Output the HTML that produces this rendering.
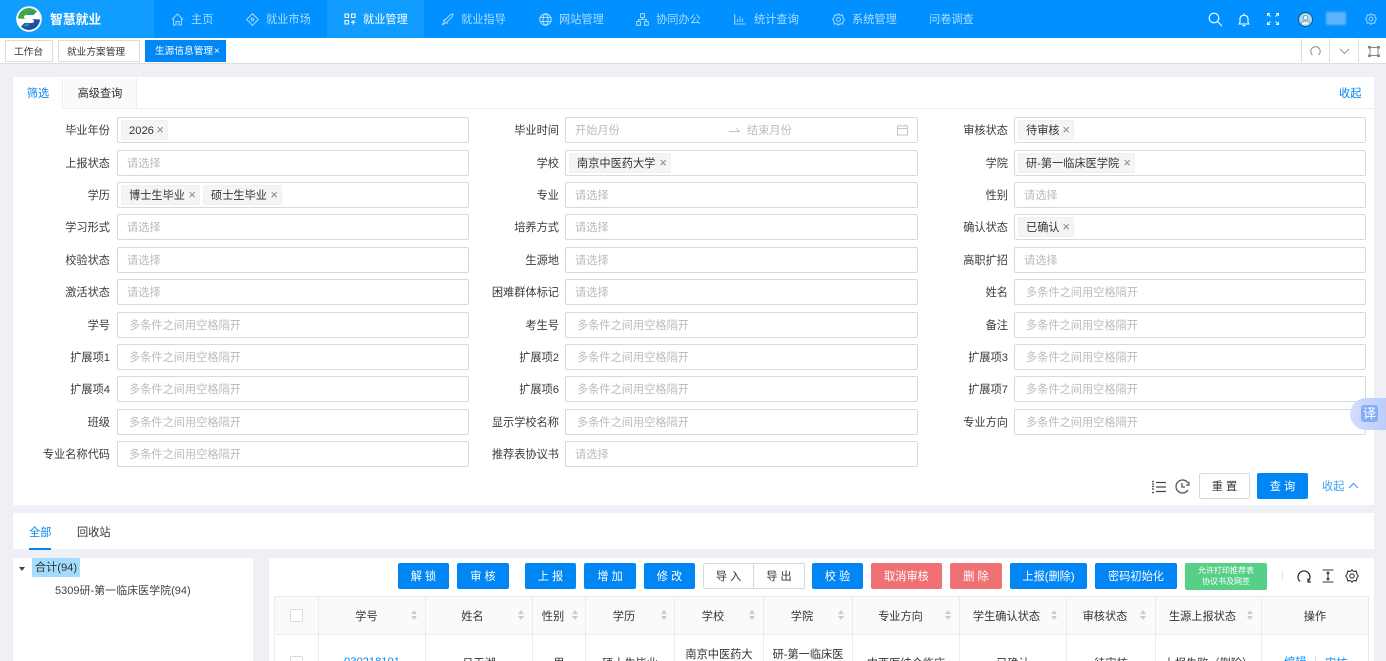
<!DOCTYPE html>
<html lang="zh"><head><meta charset="utf-8"><title>生源信息管理</title>
<style>
*{box-sizing:border-box}
html,body{margin:0;padding:0;width:1386px;height:661px;overflow:hidden}
body{background:#eff0f5;font:11.2px/1 "Liberation Sans","Noto Sans CJK SC",sans-serif;color:#333}
#w{position:absolute;left:0;top:0;width:1386px;height:661px;overflow:hidden}
.a,.a *{position:absolute}
.a{white-space:nowrap}
div,span,svg{white-space:nowrap}
.nav{left:0;top:0;width:1386px;height:38px;background:#0090ff}
.nt{top:13.5px;line-height:13px;color:rgba(255,255,255,.68);font-size:11.2px}
.nav svg{fill:none;stroke:rgba(255,255,255,.62);stroke-width:1.1}
.tab{top:40px;height:22px;border:1px solid #ddd;background:#fff;font-size:9.7px;line-height:23px;text-align:left;color:#333}
.r{left:0;width:1386px;height:26px}
.l{top:0;line-height:28px;text-align:right;width:100px;color:#3a3a3a}
.i{top:0;height:26px;border:1px solid #d9d9d9;border-radius:2px;background:#fff;line-height:26px;padding-left:9px;color:#bbb}
.p{padding-left:11px}
.c1{left:117px;width:352px}.c2{left:565px;width:353px}.c3{left:1014px;width:352px}
.i1{left:10px}.i2{left:459px}.i3{left:908px}
.t{top:2px;left:3px;height:20px;background:#f5f5f5;border:1px solid #f0f0f0;border-radius:2px;color:#333;line-height:20px;padding:0 0 0 7px}
.t i{right:3px;top:0;font-style:normal;color:#888;font-size:13px;line-height:18px}
.b{top:563px;height:26px;background:#0086f5;border-radius:2px;color:#fff;text-align:center;line-height:28px;font-size:11.2px}
.rd{background:#f07174}
.th{top:599px;height:37px;line-height:37px;text-align:center;color:#333}
.s{top:610px;width:0;height:0}
.s:before,.s:after{content:"";position:absolute;left:0;border-left:3px solid transparent;border-right:3px solid transparent}
.s:before{top:0;border-bottom:4px solid #ccc}
.s:after{top:6px;border-top:4px solid #ccc}
.v{top:596px;width:1px;height:65px;background:#ececec}
.td{top:657px;line-height:14px;text-align:center;color:#333}
</style></head><body><div id="w">

<div class="a nav">
 <div style="left:0;top:0;width:154px;height:38px;background:#119dff"></div>
 <div style="left:327px;top:0;width:97px;height:38px;background:#119dff"></div>
 <svg style="left:16px;top:6px" width="26" height="26" viewBox="0 0 26 26"><circle cx="13" cy="13" r="12.800" fill="#fff" stroke="none"/><path d="M2 12.500A11 11 0 0 1 21 5.500L17.500 9H10.500Q8 9 8 11Q8 12.500 10 13Z" fill="#43a64c" stroke="none"/><path d="M24 13.500A11 11 0 0 1 5 20.500L8.500 17H15.500Q18 17 18 15Q18 13.500 16 13Z" fill="#1d4f9e" stroke="none"/><path d="M14 5.500H19L16.500 8.500H12ZM12 20.500H7L9.500 17.500H14Z" fill="#2b8f9a" stroke="none"/></svg>
 <div style="left:50px;top:12px;font-size:12.8px;line-height:15px;font-weight:bold;color:#fff">智慧就业</div>

 <svg style="left:171px;top:13px" width="13" height="13" viewBox="0 0 13 13"><path d="M1 6.500L6.500 1L12 6.500M2.500 5.500V12H5V8.500H8V12H10.500V5.500"/></svg>
 <div class="nt" style="left:191px">主页</div>
 <svg style="left:246px;top:13px" width="13" height="13" viewBox="0 0 13 13"><path d="M6.500.7L12.300 6.500L6.500 12.300L.7 6.500Z"/><circle cx="6.500" cy="6.500" r="1.300"/></svg>
 <div class="nt" style="left:266px">就业市场</div>
 <svg style="left:344px;top:13px;stroke:#fff" width="12" height="12" viewBox="0 0 12 12"><path d="M1 1H4.500V4.500H1ZM7.500 1H11V4.500H7.500ZM1 7.500H4.500V11H1ZM9.200 7V11.500M7 9.200H11.500"/></svg>
 <div class="nt" style="left:363px;color:#fff">就业管理</div>
 <svg style="left:441px;top:13px" width="13" height="13" viewBox="0 0 13 13"><path d="M1 12L4 7L8 3Q10 1 12 1Q12 3 10 5L6 9ZM4 7H2M6 9V11"/></svg>
 <div class="nt" style="left:461px">就业指导</div>
 <svg style="left:539px;top:13px" width="13" height="13" viewBox="0 0 13 13"><circle cx="6.500" cy="6.500" r="5.700"/><ellipse cx="6.500" cy="6.500" rx="2.500" ry="5.700"/><path d="M1 4.500H12M1 8.500H12"/></svg>
 <div class="nt" style="left:559px">网站管理</div>
 <svg style="left:636px;top:13px" width="13" height="13" viewBox="0 0 13 13"><path d="M4.500 .7H8.500V4.500H4.500ZM.7 8.500H4.500V12.300H.7ZM8.500 8.500H12.300V12.300H8.500ZM6.500 4.500V6.500M2.600 8.500V6.500H10.400V8.500"/></svg>
 <div class="nt" style="left:656px">协同办公</div>
 <svg style="left:734px;top:13px" width="12" height="12" viewBox="0 0 12 12"><path d="M.7 1V11H11.500M3.500 9V6M6 9V3.500M8.500 9V5.500"/></svg>
 <div class="nt" style="left:754px">统计查询</div>
 <svg style="left:832px;top:13px" width="13" height="13" viewBox="0 0 13 13"><path d="M6.500.7L8 2.300L10.500 2L11 4.500L12.300 6.500L11 8.500L10.500 11L8 10.700L6.500 12.300L5 10.700L2.500 11L2 8.500L.7 6.500L2 4.500L2.500 2L5 2.300Z"/><circle cx="6.500" cy="6.500" r="2"/></svg>
 <div class="nt" style="left:852px">系统管理</div>
 <div class="nt" style="left:929px">问卷调查</div>

 <svg style="left:1208px;top:12px;stroke:#fff;stroke-width:1.100" width="15" height="15" viewBox="0 0 15 15"><circle cx="6" cy="6" r="4.800"/><path d="M9.500 9.500L14 14"/></svg>
 <svg style="left:1238px;top:13px;stroke:#fff;stroke-width:1.100" width="12" height="14" viewBox="0 0 12 14"><path d="M1 11H11L10 9.500V6Q10 2.500 6 2.300Q2 2.500 2 6V9.500ZM6 .5V2.300M4.500 12.700H7.500"/></svg>
 <svg style="left:1267px;top:13px;stroke:#fff;stroke-width:1" width="12" height="12" viewBox="0 0 12 12"><path d="M.5 3V.5H3M.5 .5L3.500 3.500M9 .5H11.500V3M11.500 .5L8.500 3.500M.5 9V11.500H3M.5 11.500L3.500 8.500M9 11.500H11.500V9M11.500 11.500L8.500 8.500"/></svg>
 <svg style="left:1298px;top:12px" width="15" height="15" viewBox="0 0 15 15"><circle cx="7.500" cy="7.500" r="7" fill="#a8d8f0" stroke="#1d4e7a" stroke-width="1"/><circle cx="7.500" cy="5.800" r="2.300" fill="#e8f6fc" stroke="#3b6f95" stroke-width=".6"/><path d="M3 12.300Q4 9 7.500 9Q11 9 12 12.300" fill="#e8f6fc" stroke="#3b6f95" stroke-width=".6"/></svg>
 <div style="left:1326px;top:12px;width:20px;height:13px;background:#5fb5fb;filter:blur(1px)"></div>
 <svg style="left:1365px;top:13px" width="12" height="12" viewBox="0 0 13 13"><path d="M6.500.7L8 2.300L10.500 2L11 4.500L12.300 6.500L11 8.500L10.500 11L8 10.700L6.500 12.300L5 10.700L2.500 11L2 8.500L.7 6.500L2 4.500L2.500 2L5 2.300Z"/><circle cx="6.500" cy="6.500" r="2"/></svg>
</div>

<div class="a" style="left:0;top:38px;width:1386px;height:26px;background:#fff;border-bottom:1px solid #ddd">
 <div style="left:1301px;top:1px;width:1px;height:23px;background:#ddd"></div>
 <div style="left:1329px;top:1px;width:1px;height:23px;background:#ddd"></div>
 <div style="left:1358px;top:1px;width:1px;height:23px;background:#ddd"></div>
 <svg style="left:1310px;top:7px" width="11" height="11" viewBox="0 0 11 11" fill="none" stroke="#999" stroke-width="1.100"><path d="M2.500 10A4.700 4.700 0 1 1 8.500 10"/></svg>
 <svg style="left:1339px;top:10px" width="11" height="7" viewBox="0 0 11 7" fill="none" stroke="#999" stroke-width="1"><path d="M1 1L5.500 5.500L10 1"/></svg>
 <svg style="left:1368px;top:8px" width="12" height="11" viewBox="0 0 12 11" fill="none" stroke="#888" stroke-width="1"><path d="M2 1.500H10V9.500H2Z"/><path d="M0 0H3V2.500H0ZM9 0H12V2.500H9ZM0 8.500H3V11H0ZM9 8.500H12V11H9Z" fill="#888" stroke="none"/></svg>
</div>
<div class="a tab" style="left:5px;width:48px;padding-left:8px">工作台</div>
<div class="a tab" style="left:58px;width:82px;padding-left:8px">就业方案管理</div>
<div class="a tab" style="left:145px;width:81px;background:#0086f5;border:0;color:#fff;line-height:24px;padding-left:10px">生源信息管理<span style="left:69px;top:0">×</span></div>

<!-- filter panel -->
<div class="a" style="left:13px;top:77px;width:1361px;height:428px;background:#fff"></div>
<div class="a" style="left:13px;top:108px;width:1361px;height:1px;background:#eee"></div>
<div class="a" style="left:14px;top:78px;width:49px;height:31px;background:#fff;border-right:1px solid #eee;line-height:32px;text-align:center;color:#0086f5">筛选</div>
<div class="a" style="left:64px;top:78px;width:73px;height:30px;background:#fafafa;border-right:1px solid #eee;line-height:32px;text-align:center;color:#333">高级查询</div>
<div class="a" style="left:1339px;top:87px;line-height:14px;color:#0086f5">收起</div>

<div class="a r" style="top:117px">
 <div class="l i1">毕业年份</div><div class="i c1"><div class="t" style="width:47px">2026<i>×</i></div></div>
 <div class="l i2">毕业时间</div><div class="i c2">开始月份</div>
 <div class="l i3">审核状态</div><div class="i c3"><div class="t" style="width:56px">待审核<i>×</i></div></div>
</div>
<svg class="a" style="left:729px;top:127px" width="11" height="6" viewBox="0 0 11 6" fill="none" stroke="#c4c4c4"><path d="M0 4.500H10.500L7.500 1.500"/></svg>
<div class="a" style="left:747px;top:124px;line-height:14px;color:#bbb">结束月份</div>
<svg class="a" style="left:897px;top:124px" width="11" height="12" viewBox="0 0 11 12" fill="none" stroke="#c4c4c4"><path d="M.5 2H10.500V11H.5ZM.5 4.500H10.500M3 .5V2M8 .5V2"/></svg>

<div class="a r" style="top:150px">
 <div class="l i1">上报状态</div><div class="i c1">请选择</div>
 <div class="l i2">学校</div><div class="i c2"><div class="t" style="width:102px">南京中医药大学<i>×</i></div></div>
 <div class="l i3">学院</div><div class="i c3"><div class="t" style="width:117px">研-第一临床医学院<i>×</i></div></div>
</div>
<div class="a r" style="top:182px">
 <div class="l i1">学历</div><div class="i c1"><div class="t" style="width:79px">博士生毕业<i>×</i></div><div class="t" style="left:85px;width:79px">硕士生毕业<i>×</i></div></div>
 <div class="l i2">专业</div><div class="i c2">请选择</div>
 <div class="l i3">性别</div><div class="i c3">请选择</div>
</div>
<div class="a r" style="top:214px">
 <div class="l i1">学习形式</div><div class="i c1">请选择</div>
 <div class="l i2">培养方式</div><div class="i c2">请选择</div>
 <div class="l i3">确认状态</div><div class="i c3"><div class="t" style="width:56px">已确认<i>×</i></div></div>
</div>
<div class="a r" style="top:247px">
 <div class="l i1">校验状态</div><div class="i c1">请选择</div>
 <div class="l i2">生源地</div><div class="i c2">请选择</div>
 <div class="l i3">高职扩招</div><div class="i c3">请选择</div>
</div>
<div class="a r" style="top:279px">
 <div class="l i1">激活状态</div><div class="i c1">请选择</div>
 <div class="l i2">困难群体标记</div><div class="i c2">请选择</div>
 <div class="l i3">姓名</div><div class="i c3 p">多条件之间用空格隔开</div>
</div>
<div class="a r" style="top:312px">
 <div class="l i1">学号</div><div class="i c1 p">多条件之间用空格隔开</div>
 <div class="l i2">考生号</div><div class="i c2 p">多条件之间用空格隔开</div>
 <div class="l i3">备注</div><div class="i c3 p">多条件之间用空格隔开</div>
</div>
<div class="a r" style="top:344px">
 <div class="l i1">扩展项1</div><div class="i c1 p">多条件之间用空格隔开</div>
 <div class="l i2">扩展项2</div><div class="i c2 p">多条件之间用空格隔开</div>
 <div class="l i3">扩展项3</div><div class="i c3 p">多条件之间用空格隔开</div>
</div>
<div class="a r" style="top:376px">
 <div class="l i1">扩展项4</div><div class="i c1 p">多条件之间用空格隔开</div>
 <div class="l i2">扩展项6</div><div class="i c2 p">多条件之间用空格隔开</div>
 <div class="l i3">扩展项7</div><div class="i c3 p">多条件之间用空格隔开</div>
</div>
<div class="a r" style="top:409px">
 <div class="l i1">班级</div><div class="i c1 p">多条件之间用空格隔开</div>
 <div class="l i2">显示学校名称</div><div class="i c2 p">多条件之间用空格隔开</div>
 <div class="l i3">专业方向</div><div class="i c3 p">多条件之间用空格隔开</div>
</div>
<div class="a r" style="top:441px">
 <div class="l i1">专业名称代码</div><div class="i c1 p">多条件之间用空格隔开</div>
 <div class="l i2">推荐表协议书</div><div class="i c2">请选择</div>
</div>

<svg class="a" style="left:1151px;top:480px" width="15" height="14" viewBox="0 0 15 14" fill="none" stroke="#444" stroke-width="1.200"><path d="M5 2.500H15M5 7H15M5 11.500H15M1 1.500H3M1 4H3M1 6.500H3M1 9H3M1 12.500H3"/></svg>
<svg class="a" style="left:1175px;top:479px" width="15" height="15" viewBox="0 0 15 15" fill="none" stroke="#555" stroke-width="1.300"><path d="M13 11A6.500 6.500 0 1 1 13 4M7 4V8H10M11 6H14V3"/></svg>
<div class="a" style="left:1199px;top:473px;width:51px;height:26px;border:1px solid #d9d9d9;border-radius:2px;background:#fff;line-height:26px;text-align:center;color:#333">重 置</div>
<div class="a" style="left:1257px;top:473px;width:51px;height:26px;border-radius:2px;background:#0086f5;line-height:28px;text-align:center;color:#fff">查 询</div>
<div class="a" style="left:1322px;top:480px;line-height:14px;color:#3d9ff5">收起</div>
<svg class="a" style="left:1348px;top:482px" width="11" height="7" viewBox="0 0 11 7" fill="none" stroke="#3d9ff5" stroke-width="1.200"><path d="M1 6L5.500 1.500L10 6"/></svg>

<div class="a" style="left:1350px;top:398px;width:36px;height:32px;border-radius:16px 0 0 16px;background:linear-gradient(90deg,#d4dcff,#bcccfb)"></div>
<div class="a" style="left:1361px;top:405px;width:17px;height:17px;border-radius:3px;background:#85aef8;color:#fff;font-size:13px;line-height:18px;text-align:center">译</div>

<!-- second panel -->
<div class="a" style="left:13px;top:513px;width:1361px;height:36px;background:#fff"></div>
<div class="a" style="left:29px;top:527px;line-height:13px;color:#0086f5">全部</div>
<div class="a" style="left:29px;top:548px;width:22px;height:2px;background:#0086f5"></div>
<div class="a" style="left:77px;top:527px;line-height:13px;color:#333">回收站</div>

<!-- tree -->
<div class="a" style="left:13px;top:558px;width:240px;height:103px;background:#fff"></div>
<div class="a" style="left:19px;top:567px;width:0;height:0;border-left:3px solid transparent;border-right:3px solid transparent;border-top:4px solid #444"></div>
<div class="a" style="left:32px;top:558px;width:48px;height:19px;background:#a3dcff;border-radius:1px;line-height:21px;text-align:center;color:#333">合计(94)</div>
<div class="a" style="left:55px;top:585px;line-height:13px;font-size:11px;color:#444">5309研-第一临床医学院(94)</div>

<!-- table panel -->
<div class="a" style="left:269px;top:558px;width:1105px;height:103px;background:#fff"></div>
<div class="a b" style="left:398px;width:51px">解 锁</div>
<div class="a b" style="left:457px;width:52px">审 核</div>
<div class="a b" style="left:525px;width:51px">上 报</div>
<div class="a b" style="left:584px;width:52px">增 加</div>
<div class="a b" style="left:644px;width:51px">修 改</div>
<div class="a b" style="left:703px;width:51px;background:#fff;color:#333;border:1px solid #d9d9d9;line-height:26px;border-radius:2px 0 0 2px">导 入</div>
<div class="a b" style="left:753px;width:52px;background:#fff;color:#333;border:1px solid #d9d9d9;line-height:26px;border-radius:0 2px 2px 0">导 出</div>
<div class="a b" style="left:812px;width:51px">校 验</div>
<div class="a b rd" style="left:871px;width:71px">取消审核</div>
<div class="a b rd" style="left:950px;width:52px">删 除</div>
<div class="a b" style="left:1010px;width:77px">上报(删除)</div>
<div class="a b" style="left:1095px;width:82px">密码初始化</div>
<div class="a b" style="left:1185px;width:82px;height:27px;background:#56cf87"></div>
<div class="a" style="left:1185px;top:566px;width:82px;text-align:center;color:#fff;font-size:8px;line-height:10px">允许打印推荐表</div>
<div class="a" style="left:1185px;top:576.500px;width:82px;text-align:center;color:#fff;font-size:8px;line-height:10px">协议书及网签</div>
<div class="a" style="left:1282px;top:570px;width:1px;height:11px;background:#e5e5e5"></div>
<svg class="a" style="left:1297px;top:569px" width="14" height="14" viewBox="0 0 14 14" fill="none" stroke="#333" stroke-width="1.300"><path d="M3 12.500A6 6 0 1 1 11 12.500M11 9.500V13H14"/></svg>
<svg class="a" style="left:1322px;top:569px" width="12" height="14" viewBox="0 0 12 14" fill="none" stroke="#333" stroke-width="1.100"><path d="M.5 1H11.500M.5 13H11.500M6 3V11M4.500 4.500L6 3L7.500 4.500M4.500 9.500L6 11L7.500 9.500"/></svg>
<svg class="a" style="left:1345px;top:569px" width="14" height="14" viewBox="0 0 13 13" fill="none" stroke="#333" stroke-width="1"><path d="M6.500.7L8 2.300L10.500 2L11 4.500L12.300 6.500L11 8.500L10.500 11L8 10.700L6.500 12.300L5 10.700L2.500 11L2 8.500L.7 6.500L2 4.500L2.500 2L5 2.300Z"/><circle cx="6.500" cy="6.500" r="2"/></svg>

<!-- table -->
<div class="a" style="left:274px;top:596px;width:1095px;height:39px;background:#fafafa;border-top:1px solid #ececec;border-bottom:1px solid #ececec"></div>
<div class="a v" style="left:274px"></div><div class="a v" style="left:318px"></div><div class="a v" style="left:425px"></div><div class="a v" style="left:532px"></div><div class="a v" style="left:585px"></div><div class="a v" style="left:674px"></div><div class="a v" style="left:763px"></div><div class="a v" style="left:852px"></div><div class="a v" style="left:959px"></div><div class="a v" style="left:1066px"></div><div class="a v" style="left:1155px"></div><div class="a v" style="left:1261px"></div><div class="a v" style="left:1368px"></div>

<div class="a" style="left:290px;top:609px;width:13px;height:13px;border:1px solid #d9d9d9;border-radius:2px;background:#fff"></div>
<div class="a th" style="left:320px;width:93px">学号</div><div class="a s" style="left:411px"></div>
<div class="a th" style="left:426px;width:93px">姓名</div><div class="a s" style="left:518px"></div>
<div class="a th" style="left:533px;width:40px">性别</div><div class="a s" style="left:572px"></div>
<div class="a th" style="left:586px;width:76px">学历</div><div class="a s" style="left:661px"></div>
<div class="a th" style="left:675px;width:76px">学校</div><div class="a s" style="left:749px"></div>
<div class="a th" style="left:764px;width:76px">学院</div><div class="a s" style="left:838px"></div>
<div class="a th" style="left:854px;width:93px">专业方向</div><div class="a s" style="left:945px"></div>
<div class="a th" style="left:960px;width:93px">学生确认状态</div><div class="a s" style="left:1051px"></div>
<div class="a th" style="left:1067px;width:76px">审核状态</div><div class="a s" style="left:1140px"></div>
<div class="a th" style="left:1156px;width:93px">生源上报状态</div><div class="a s" style="left:1247px"></div>
<div class="a th" style="left:1262px;width:106px">操作</div>

<div class="a" style="left:290px;top:656px;width:13px;height:13px;border:1px solid #d9d9d9;border-radius:2px;background:#fff"></div>
<div class="a td" style="left:319px;top:655px;width:106px;color:#0086f5">030218101</div>
<div class="a td" style="left:426px;width:106px">吕玉湖</div>
<div class="a td" style="left:533px;width:52px">男</div>
<div class="a td" style="left:586px;width:88px">硕士生毕业</div>
<div class="a td" style="left:675px;top:648px;width:88px">南京中医药大</div>
<div class="a td" style="left:764px;top:648px;width:88px">研-第一临床医</div>
<div class="a td" style="left:853px;width:106px">中西医结合临床</div>
<div class="a td" style="left:960px;width:106px">已确认</div>
<div class="a td" style="left:1067px;width:88px">待审核</div>
<div class="a td" style="left:1156px;width:105px">上报失败（删除）</div>
<div class="a td" style="left:1284px;top:656px;color:#0086f5">编辑</div>
<div class="a" style="left:1315px;top:656px;width:1px;height:5px;background:#ddd"></div>
<div class="a td" style="left:1325px;color:#0086f5">审核</div>
</div></body></html>
